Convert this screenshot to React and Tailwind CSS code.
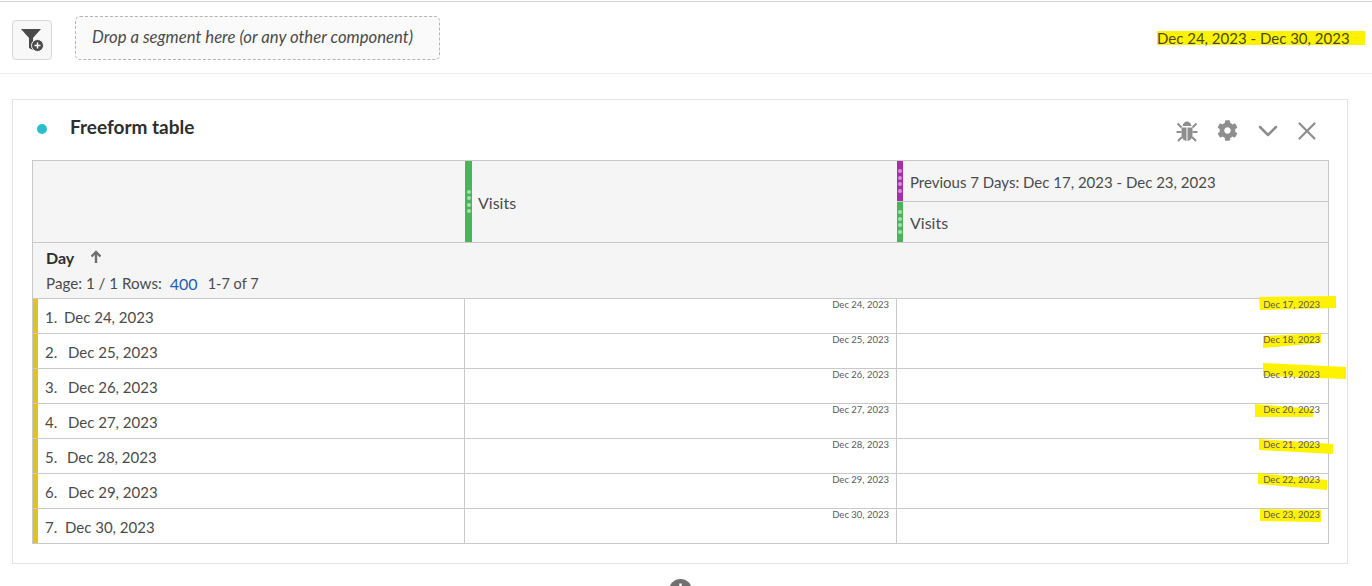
import { FaCog } from "react-icons/fa";
import { ChevronDown, X } from "lucide-react";

// hand drawn marker strokes, points are relative to the cell top left
const rows = [
  { n: "1.", w: "w-[19px]", day: "Dec 24, 2023", prev: "Dec 17, 2023", mark: "362,-2 439,-3 439,9 363,11" },
  { n: "2.", w: "w-[23px]", day: "Dec 25, 2023", prev: "Dec 18, 2023", mark: "366,2 424,-1 424,9 366,14" },
  { n: "3.", w: "w-[23px]", day: "Dec 26, 2023", prev: "Dec 19, 2023", mark: "366,-6 449,-2 449,10 366,7" },
  { n: "4.", w: "w-[23px]", day: "Dec 27, 2023", prev: "Dec 20, 2023", mark: "358,0 416,5 416,13 358,13" },
  { n: "5.", w: "w-[22px]", day: "Dec 28, 2023", prev: "Dec 21, 2023", mark: "362,0 436,5 436,15 362,11" },
  { n: "6.", w: "w-[23px]", day: "Dec 29, 2023", prev: "Dec 22, 2023", mark: "361,-1 430,6 430,16 361,10" },
  { n: "7.", w: "w-[20px]", day: "Dec 30, 2023", prev: "Dec 23, 2023", mark: "363,0 424,1 424,13 363,12" },
];

const Grip = ({ color, dots, width = "w-[7px]" }) => (
  <div className={`${width} shrink-0 flex flex-col items-center justify-center gap-[2.5px] ${color}`}>
    {[0, 1, 2, 3].map((i) => (
      <span key={i} className={`w-[4px] h-[4px] rounded-full ${dots}`} />
    ))}
  </div>
);

const BugIcon = () => (
  <svg width="22" height="22" viewBox="0 0 22 22" fill="#8e8e8e">
    <path d="M6.5 6C7 3 9 1.5 11 1.5S15 3 15.5 6z" />
    <path d="M5.5 7.5h5V21C7.5 20.5 5.5 18 5.5 14.5z" />
    <path d="M16.5 7.5h-5V21c3-.5 5-3 5-6.5z" />
    <path d="M1.5 3.5l4 4M20.5 3.5l-4 4M0.5 12h5M21.5 12h-5M2 21l4-4M20 21l-4-4" stroke="#8e8e8e" strokeWidth="2" fill="none" />
  </svg>
);

const Row = ({ row }) => (
  <div className="flex h-[35px] last:h-[34px] border-b border-[#c9c9c9] last:border-b-0 bg-white">
    <div className="w-[432px] shrink-0 flex border-r border-[#c9c9c9]">
      <div className="w-[5px] bg-[#e0c320]" />
      <div className="flex items-center pl-[7px] pt-[2px] text-[15px] text-[#4b4b4b]">
        <span className={row.w}>{row.n}</span>
        <span>{row.day}</span>
      </div>
    </div>
    <div className="w-[432px] shrink-0 border-r border-[#c9c9c9] pr-[7px] text-right text-[9.5px] leading-[11px] text-[#5a5a5a]">
      {row.day}
    </div>
    <div className="relative flex-1 pr-[8px] text-right text-[9.5px] leading-[11px] text-[#5a5a5a]">
      <svg className="absolute left-0 top-0 overflow-visible" width="1" height="1">
        <polygon points={row.mark} fill="#fff200" />
      </svg>
      <span className="relative">{row.prev}</span>
    </div>
  </div>
);

export default function App() {
  return (
    <div className="h-[586px] overflow-hidden bg-white pt-px font-['Lato','Noto_Sans',sans-serif] text-[#4b4b4b]">
      <div className="flex h-[73px] border-y border-y-[#d2d2d2] border-b-[#ececec] pl-[12px] pr-[7px]">
        <button className="self-start w-[40px] h-[40px] mt-[18px] flex items-center justify-center rounded-[4px] border border-[#d8d8d8] bg-[#f8f8f8]">
          <svg width="24" height="24" viewBox="0 0 24 24">
            <path d="M1 1h20l-8 9v12l-4-2V10z" fill="#4a4a4a" />
            <circle cx="17.5" cy="17.5" r="6" fill="#4a4a4a" stroke="#f8f8f8" strokeWidth="1" />
            <path d="M17.5 14.5v6M14.5 17.5h6" stroke="#fff" strokeWidth="1.5" />
          </svg>
        </button>
        <div className="self-start mt-[14px] ml-[23px] w-[365px] h-[44px] flex items-center pl-[16px] rounded-[5px] border border-dashed border-[#b4b4b4] bg-[#fafafa] italic text-[16.7px] whitespace-nowrap">
          Drop a segment here (or any other component)
        </div>
        <div className="self-start mt-[29px] ml-auto relative w-[208px] h-[14px] bg-[#fff200] text-[15px] text-[#4a4a20]">
          <span className="absolute left-0 top-[-3px] leading-[20px] whitespace-nowrap">Dec 24, 2023 - Dec 30, 2023</span>
        </div>
      </div>

      <div className="mx-[12px] mt-[25px] h-[465px] w-[1336px] border border-[#e3e3e3] px-[19px]">
        <div className="flex items-center h-[60px]">
          <span className="ml-[5px] w-[10px] h-[10px] rounded-full bg-[#2bbdcc] -mt-[3px]" />
          <span className="ml-[23px] text-[19px] font-bold text-[#2e2e2e] -mt-[5px]">Freeform table</span>
          <div className="ml-auto flex items-center mr-[6px] text-[#8e8e8e] mt-[1px]">
            <BugIcon />
            <FaCog size={21} className="ml-[19px]" />
            <ChevronDown size={32} strokeWidth={1.9} className="ml-[14px]" />
            <X size={30} strokeWidth={1.8} className="ml-[8px]" />
          </div>
        </div>

        <div className="w-[1297px] border border-[#c9c9c9] text-[16px]">
          <div className="flex h-[82px] bg-[#f5f5f5] border-b border-[#c9c9c9]">
            <div className="w-[432px] shrink-0" />
            <div className="w-[432px] shrink-0 flex">
              <Grip color="bg-[#4bb45a]" dots="bg-[#a5dfae]" />
              <div className="flex items-center pl-[6px] pt-[2px]">Visits</div>
            </div>
            <div className="flex-1 flex flex-col">
              <div className="flex h-[41px] border-b border-[#c9c9c9]">
                <Grip color="bg-[#a62fa9]" dots="bg-[#d68fd8]" width="w-[6px]" />
                <div className="flex items-center pl-[7px] pt-[2px] text-[15px]">Previous 7 Days: Dec 17, 2023 - Dec 23, 2023</div>
              </div>
              <div className="flex flex-1">
                <Grip color="bg-[#4bb45a]" dots="bg-[#a5dfae]" width="w-[6px]" />
                <div className="flex items-center pl-[7px] pt-[2px]">Visits</div>
              </div>
            </div>
          </div>

          <div className="h-[56px] bg-[#f5f5f5] border-b border-[#c9c9c9] pl-[13px]">
            <div className="flex items-center h-[29px]">
              <span className="font-bold text-[#2e2e2e]">Day</span>
              <svg width="14" height="14" viewBox="0 0 14 14" className="ml-[15px] -mt-[2px]" fill="none" stroke="#6e6e6e" strokeWidth="2.4">
                <path d="M7 13V2M2.5 6.5L7 2l4.5 4.5" />
              </svg>
            </div>
            <div className="flex items-center h-[21px] pt-[2px] text-[15.2px]">
              <span>Page: 1 / 1 Rows:</span>
              <span className="ml-[8px] text-[16px] text-[#1a5fb4]">400</span>
              <span className="ml-[10px] text-[14.5px]">1-7 of 7</span>
            </div>
          </div>

          {rows.map((row) => (
            <Row key={row.n} row={row} />
          ))}
        </div>
      </div>

      <div className="flex justify-center mt-[15px] pr-[12px]">
        <svg width="23" height="23" viewBox="0 0 23 23">
          <circle cx="11.5" cy="11.5" r="11.5" fill="#707070" />
          <path d="M11.5 4.5v14M4.5 11.5h14" stroke="#fff" strokeWidth="2.4" />
        </svg>
      </div>
    </div>
  );
}
